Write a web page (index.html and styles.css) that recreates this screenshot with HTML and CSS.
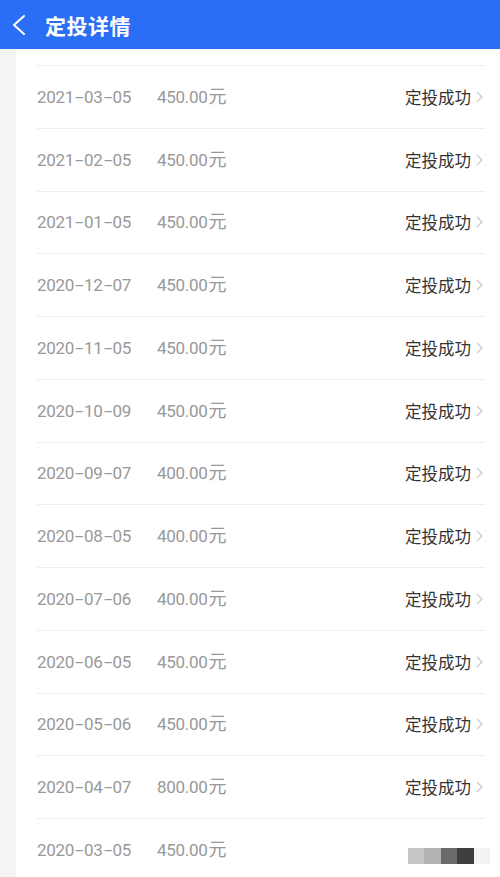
FILE: index.html
```html
<!DOCTYPE html>
<html lang="zh-CN">
<head>
    <meta charset="UTF-8">
    <meta name="viewport" content="width=device-width, initial-scale=1.0">
    <title>定投详情</title>
    <link rel="stylesheet" href="styles.css">
</head>
<body>
    <header class="topbar">
        <svg class="back" width="16" height="22" viewBox="0 0 16 22">
            <path d="M13 2 L3 11 L13 20" fill="none" stroke="#fff" stroke-width="2" stroke-linecap="round" stroke-linejoin="round"/>
        </svg>
        <h1>定投详情</h1>
    </header>

    <div class="page">
        <div class="side"></div>
        <ul class="records" id="records"></ul>
    </div>

    <script>
        // [date, amount, status]
        const records = [
            ["2021-03-05", "450.00", "定投成功"],
            ["2021-02-05", "450.00", "定投成功"],
            ["2021-01-05", "450.00", "定投成功"],
            ["2020-12-07", "450.00", "定投成功"],
            ["2020-11-05", "450.00", "定投成功"],
            ["2020-10-09", "450.00", "定投成功"],
            ["2020-09-07", "400.00", "定投成功"],
            ["2020-08-05", "400.00", "定投成功"],
            ["2020-07-06", "400.00", "定投成功"],
            ["2020-06-05", "450.00", "定投成功"],
            ["2020-05-06", "450.00", "定投成功"],
            ["2020-04-07", "800.00", "定投成功"],
            ["2020-03-05", "450.00", null]
        ];

        const chevron = '<svg class="chev" width="7" height="12" viewBox="0 0 7 12"><path d="M1 1 L6 6 L1 11" fill="none" stroke="#c6c6c6" stroke-width="1.1"/></svg>';
        const blurred = '<span class="blur"><b class="b1"></b><b class="b2"></b><b class="b3"></b><b class="b4"></b><b class="b5"></b></span>';

        const list = document.getElementById("records");
        records.forEach(([date, amount, status]) => {
            const li = document.createElement("li");
            li.className = "row";
            const dateHtml = date.split("-").join('<span class="dash">-</span>');
            li.innerHTML =
                '<span class="date">' + dateHtml + '</span>' +
                '<span class="amount">' + amount + '<span class="unit">元</span></span>' +
                (status ? '<span class="status">' + status + '</span>' + chevron : blurred);
            list.appendChild(li);
        });
    </script>
</body>
</html>
```

FILE: styles.css
```css
* {
    box-sizing: border-box;
}
body {
    margin: 0;
    font-family: "Noto Sans", "Noto Sans CJK SC", sans-serif;
    background: #fff;
    overflow: hidden;
}
.topbar {
    height: 49px;
    background: #2b6ef6;
    display: flex;
    align-items: center;
    padding-left: 11px;
}
.back {
    margin-right: 18px;
}
.topbar h1 {
    margin: 0;
    color: #fff;
    font-size: 21px;
    font-weight: bold;
    letter-spacing: 0.5px;
}
.page {
    display: flex;
}
.side {
    width: 16px;
    background: #f4f4f4;
    flex-shrink: 0;
}
.records {
    list-style: none;
    margin: 0;
    padding: 16px 15px 0 21px;
    flex: 1;
}
.row {
    height: 62.75px;
    border-top: 1px solid #efefef;
    display: flex;
    align-items: center;
}
.date,
.amount {
    font-family: Roboto, "Noto Sans CJK SC", sans-serif;
    font-size: 17px;
    letter-spacing: -0.3px;
    line-height: 24px;
    color: #999;
}
.date {
    width: 120px;
}
.dash {
    display: inline-block;
    width: 10px;
    text-align: center;
    transform: scaleX(1.8);
}
.unit {
    font-size: 18px;
    line-height: 0;
    margin-left: 1px;
}
.status {
    margin-left: auto;
    font-size: 16.5px;
    color: #333;
}
.chev {
    margin: 0 2px 0 5px;
}
.blur {
    margin-left: auto;
    margin-right: -5px;
    margin-top: 12px;
    display: flex;
}
.blur b {
    width: 16.4px;
    height: 16px;
}
.b1 { background: #c6c6c6; }
.b2 { background: #b2b2b2; }
.b3 { background: #6a6a6a; }
.b4 { background: #3e3e3e; }
.b5 { background: #f3f3f3; }
```
